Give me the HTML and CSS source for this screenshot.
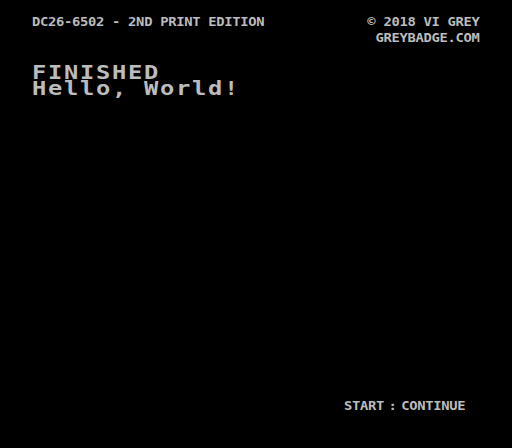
FILE: index.html
```html
<!DOCTYPE html>
<html>
<head>
<meta charset="utf-8">
<link rel="stylesheet" href="styles.css">
</head>
<body>
<div class="screen">
  <header class="top">
    <div class="title row">DC26-6502 - 2ND PRINT EDITION</div>
    <div class="credit">
      <div class="row right">© 2018 VI GREY</div>
      <div class="row right">GREYBADGE.COM</div>
    </div>
  </header>
  <main class="message">
    <div class="big">FINISHED</div>
    <div class="big">Hello, World!</div>
  </main>
  <footer class="hint row">START : CONTINUE</footer>
</div>
</body>
</html>
```
FILE: styles.css
```css
html, body {
  margin: 0;
  padding: 0;
  background: #000;
}
.screen {
  width: 512px;
  height: 448px;
  box-sizing: border-box;
  padding: 18px 32px 38px 32px;
  display: flex;
  flex-direction: column;
  background: #000;
  color: #bcbcbc;
  font-family: "DejaVu Sans Mono", "Liberation Mono", monospace;
  font-weight: bold;
  overflow: hidden;
}
.row {
  font-size: 12px;
  line-height: 8px;
  height: 8px;
  letter-spacing: -0.26px;
  white-space: pre;
  width: fit-content;
  transform: scaleX(1.15);
  transform-origin: left center;
}
.row.right {
  transform-origin: right center;
}
.top {
  display: flex;
  justify-content: space-between;
  align-items: flex-start;
}
.credit {
  display: flex;
  flex-direction: column;
  align-items: flex-end;
  gap: 8px;
}
.message {
  margin-top: 22px;
  display: flex;
  flex-direction: column;
}
.big {
  font-size: 19px;
  line-height: 16px;
  height: 16px;
  letter-spacing: 1.36px;
  white-space: pre;
  width: fit-content;
  transform: scaleX(1.25);
  transform-origin: left center;
}
.hint {
  margin-top: auto;
  margin-left: 312px;
  word-spacing: -3px;
}
```
